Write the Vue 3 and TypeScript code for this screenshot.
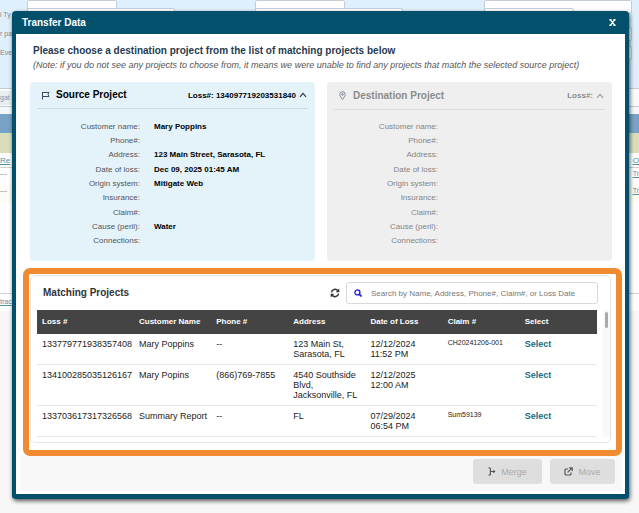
<script setup lang="ts">
import { ref, computed } from 'vue'

interface Detail { label: string; value: string }
interface Project {
  loss: string
  name: string
  phone: string
  address: string
  date: string
  time: string
  claim: string
}

const source: Detail[] = [
  { label: 'Customer name:', value: 'Mary Poppins' },
  { label: 'Phone#:', value: '' },
  { label: 'Address:', value: '123 Main Street, Sarasota, FL' },
  { label: 'Date of loss:', value: 'Dec 09, 2025 01:45 AM' },
  { label: 'Origin system:', value: 'Mitigate Web' },
  { label: 'Insurance:', value: '' },
  { label: 'Claim#:', value: '' },
  { label: 'Cause (peril):', value: 'Water' },
  { label: 'Connections:', value: '' },
]

const projects: Project[] = [
  { loss: '133779771938357408', name: 'Mary Poppins', phone: '--', address: '123 Main St, Sarasota, FL', date: '12/12/2024', time: '11:52 PM', claim: 'CH20241206-001' },
  { loss: '134100285035126167', name: 'Mary Popins', phone: '(866)769-7855', address: '4540 Southside Blvd, Jacksonville, FL', date: '12/12/2025', time: '12:00 AM', claim: '' },
  { loss: '133703617317326568', name: 'Summary Report', phone: '--', address: 'FL', date: '07/29/2024', time: '06:54 PM', claim: 'Sum59139' },
]

const columns = ['Loss #', 'Customer Name', 'Phone #', 'Address', 'Date of Loss', 'Claim #', 'Select']
const query = ref('')
const visible = computed(() => {
  const q = query.value.trim().toLowerCase()
  return q ? projects.filter((p) => Object.values(p).join(' ').toLowerCase().includes(q)) : projects
})
</script>

<template>
  <div class="screen">
    <div class="backdrop" aria-hidden="true">
      <div class="filters">
        <div class="frow first"><span></span><i class="box short"></i><i class="box short"></i><i class="box long"></i></div>
        <div class="frow"><span>l Ty</span><i class="box long"></i><i class="box long"></i><i class="box short"></i></div>
        <div class="frow"><span>r pa</span><i class="box wide"></i></div>
        <div class="frow"><span>Eve</span><i class="box wide"></i></div>
      </div>
      <div class="tools"><span>gat</span></div>
      <div class="band blue"></div>
      <div class="band khaki"></div>
      <div class="brow strong"><u>Re</u><u>O</u></div>
      <div class="brow"><span>---</span><u>Tr</u></div>
      <div class="brow tint"><span>---</span><u>Tr</u></div>
      <div class="blank"></div>
      <div class="brow tail"><u>trac</u></div>
    </div>

    <div class="overlay">
      <section class="modal" role="dialog" aria-labelledby="dialog-title">
        <header class="bar">
          <h1 id="dialog-title">Transfer Data</h1>
          <button class="close" type="button" aria-label="Close">
            <svg viewBox="0 0 7 7" width="7" height="7"><path d="M1.2 .6 5.8 6.4M5.8 .6 1.2 6.4M.4 .8H2.6M4.4 .8H6.6M.4 6.2H2.6M4.4 6.2H6.6" stroke="#fff" stroke-width="1.5" /></svg>
          </button>
        </header>

        <div class="content">
          <div class="intro">
            <h2>Please choose a destination project from the list of matching projects below</h2>
            <p>(Note: if you do not see any projects to choose from, it means we were unable to find any projects that match the selected source project)</p>
          </div>

          <div class="panels">
            <article class="panel source">
              <div class="panel-head">
                <svg class="lead" viewBox="0 0 9 9" width="9" height="9" fill="none" stroke="#3c4c60"><path d="M1.5 1V8.5M1.5 1.5H8L7 3.5 8 5.5H1.5" /></svg>
                <h3>Source Project</h3>
                <span class="loss">Loss#: 134097719203531840</span>
                <svg viewBox="0 0 8 6" width="8" height="6" fill="none" stroke="#333"><path d="M1 4.8 4 1.4 7 4.8" stroke-width="1.1" /></svg>
              </div>
              <dl>
                <template v-for="d in source" :key="d.label"><dt>{{ d.label }}</dt><dd>{{ d.value }}</dd></template>
              </dl>
            </article>
            <article class="panel dest">
              <div class="panel-head">
                <svg class="lead" viewBox="0 0 9 9" width="9" height="9" fill="none" stroke="#7b8797"><path d="M4.5 8.4C3 6.4 1.8 5 1.8 3.5a2.7 2.7 0 0 1 5.4 0C7.2 5 6 6.4 4.5 8.4Z" /><circle cx="4.5" cy="3.5" r=".8" /></svg>
                <h3>Destination Project</h3>
                <span class="loss">Loss#:</span>
                <svg viewBox="0 0 8 6" width="8" height="6" fill="none" stroke="#999"><path d="M1 4.8 4 1.4 7 4.8" stroke-width="1.1" /></svg>
              </div>
              <dl>
                <template v-for="d in source" :key="d.label"><dt>{{ d.label }}</dt><dd></dd></template>
              </dl>
            </article>
          </div>

          <div class="highlight">
            <div class="card">
              <div class="card-head">
                <h3>Matching Projects</h3>
                <button class="refresh" type="button" aria-label="Refresh">
                  <svg viewBox="0 0 10 10" width="10" height="10" fill="none" stroke="#333" stroke-width="1.5"><path d="M1.4 4.3A3.7 3.7 0 0 1 7.9 2.7M8.6 5.7A3.7 3.7 0 0 1 2.1 7.3" /><path d="M9.3 .6V4.2H5.7ZM.7 9.4V5.8H4.3Z" fill="#333" stroke="none" /></svg>
                </button>
                <label class="search">
                  <svg viewBox="0 0 8 8" width="8" height="8" fill="none" stroke="#2222d8"><circle cx="3.4" cy="3.4" r="2.5" stroke-width="1.4" /><path d="M5.2 5.2 7.5 7.5" stroke-width="1.7" /></svg>
                  <input v-model="query" type="text" aria-label="Search projects" placeholder="Search by Name, Address, Phone#, Claim#, or Loss Date" />
                </label>
              </div>
              <div class="list">
                <table>
                  <thead><tr><th v-for="c in columns" :key="c" scope="col">{{ c }}</th></tr></thead>
                  <tbody>
                    <tr v-for="p in visible" :key="p.loss">
                      <td>{{ p.loss }}</td>
                      <td>{{ p.name }}</td>
                      <td>{{ p.phone }}</td>
                      <td>{{ p.address }}</td>
                      <td>{{ p.date }}<br />{{ p.time }}</td>
                      <td class="claim">{{ p.claim }}</td>
                      <td><a href="#">Select</a></td>
                    </tr>
                  </tbody>
                </table>
                <div class="track"><div class="thumb"></div></div>
              </div>
            </div>
          </div>

          <footer>
            <button class="action" type="button" disabled>
              <svg viewBox="0 0 8 9" width="8" height="9" fill="none" stroke="#555" stroke-width="1.2"><path d="M.6.9H1.4Q2.4.9 2.4 2V7Q2.4 8.1 1.4 8.1H.6M2.4 4.5H7" /><path d="M5.2 2.8 7.6 4.5 5.2 6.2Z" fill="#555" stroke="none" /></svg>
              Merge
            </button>
            <button class="action move" type="button" disabled>
              <svg viewBox="0 0 9 9" width="9" height="9" fill="none" stroke="#555" stroke-width="1.2"><path d="M4 2H1.9Q1 2 1 2.9V7.1Q1 8 1.9 8H6.1Q7 8 7 7.1V5.5M3.6 5.4 7.6 1.4M5.2 .9H8.2V3.9" /></svg>
              Move
            </button>
          </footer>
        </div>
      </section>
    </div>
  </div>
</template>

<style>
body { background: #f7f7f7; }
</style>

<style scoped>
* { box-sizing: border-box; }
h1, h2, h3, p, dl, dd { margin: 0; }
button { font: inherit; border: 0; padding: 0; background: none; }
svg { display: block; flex: none; }
.screen { position: relative; min-height: 100vh; overflow: hidden; font-family: "Liberation Sans", Arial, sans-serif; font-size: 8px; }

.backdrop { font-size: 7px; color: #7f8790; line-height: 10px; }
.filters { height: 88px; overflow: hidden; background: #e0effc; }
.frow { display: grid; grid-template-columns: 27px 228px 229px 1fr; height: 19px; align-items: center; }
.frow span { white-space: nowrap; }
.frow.first { height: 5px; align-items: end; }
.box { height: 14px; background: #fff; border: 1px solid #c5ced6; border-radius: 2px; }
.box.short { width: 90px; }
.box.long { width: 148px; }
.box.wide { grid-column: 2 / 5; margin-right: 7px; }
.tools { display: flex; align-items: center; height: 19px; background: #f8fafb; border: solid #c3ccd3; border-width: 1px 0; color: #6a9ab8; }
.tools span { padding: 2px 2px 2px 0; background: #e8edf1; }
.band { height: 20px; }
.band.blue { height: 26px; border-top: 7px solid #f4f8fb; background: #78a3c6; }
.band.khaki { background: #d8deba; }
.brow { display: flex; justify-content: space-between; height: 17px; padding-top: 1px; background: #fff; color: #7a7a7a; white-space: nowrap; }
.brow u { color: #4b94a8; }
.brow.strong { height: 15px; padding-top: 3px; font-size: 8px; border-bottom: 1px solid #d0d0d0; }
.brow.tint { background: #fdfdf5; }
.blank { height: 92px; background: #fff; border-bottom: 1px solid #d0d0d0; }
.brow.tail { padding-top: 3px; }

.overlay { position: absolute; inset: 0; padding: 11px 10px 14px 12px; }
.modal { background: #fff; border: solid #03506d; border-width: 0 4px 5px; border-radius: 4px; box-shadow: 1px 2px 4px rgba(0, 0, 0, 0.65); overflow: hidden; }
.bar { display: flex; align-items: center; justify-content: space-between; height: 23px; padding: 0 8px 0 6px; background: #03506d; color: #fff; }
.bar h1 { font-size: 10px; line-height: 14px; }
.close { padding: 1px; }
.intro { padding: 10px 17px 0; }
.intro h2 { font-size: 10px; line-height: 14px; color: #263b50; }
.intro p { font-size: 9px; line-height: 14px; font-style: italic; color: #555; white-space: nowrap; }

.panels { display: grid; grid-template-columns: 1fr 1fr; gap: 12px; padding: 10px 13px 0 14px; }
.panel { padding: 0 7px 13px; border-radius: 4px; }
.source { background: #e4f2fa; }
.dest { background: #efefef; color: #8b8b8b; }
.panel-head { display: flex; align-items: center; height: 27px; padding: 0 1px 0 4px; border-bottom: 1px solid #ccdbe3; }
.dest .panel-head { height: 28px; border-color: #dcdcdc; }
.panel-head h3 { margin-left: 6px; font-size: 10px; line-height: 14px; }
.loss { margin: 0 3px 0 auto; font-weight: bold; }
dl { display: grid; grid-template-columns: 103px 1fr; column-gap: 14px; grid-auto-rows: 1fr; min-height: 129px; margin-top: 10px; align-items: center; }
.dest dl { margin-top: 9px; grid-template-columns: 104px 1fr; }
dt { text-align: right; color: #555; }
dd { font-weight: bold; color: #000; }
.dest dt { color: #858585; }

.highlight { margin: 7px 3px 0 7px; padding: 1px 5px 7px 1px; border: 6px solid #f08b32; border-radius: 7px; }
.card { border: 1px solid #e6e6e6; border-radius: 5px; padding-bottom: 5px; }
.card-head { display: flex; align-items: center; padding: 6px 12px 6px 12px; height: 34px; }
.card-head h3 { font-size: 10px; line-height: 14px; color: #333; }
.refresh { margin: 0 6px 0 auto; }
.search { display: flex; align-items: center; gap: 9px; width: 252px; height: 22px; padding: 0 7px; border: 1px solid #d8d8d8; border-radius: 3px; }
.search input { flex: 1; min-width: 0; padding: 0; border: 0; outline: 0; background: none; font: inherit; color: #333; }
.search input::placeholder { color: #777; }
.list { display: grid; grid-template-columns: 1fr 7px; column-gap: 6px; padding-left: 6px; }
table { width: 100%; table-layout: fixed; border-collapse: collapse; font-size: 9px; line-height: 10px; color: #222; }
th { height: 24px; padding: 0 5px; background: #444; color: #fff; font-size: 8px; text-align: left; }
th:first-child { width: 97px; }
td { padding: 5px; vertical-align: top; border-bottom: 1px solid #e8e8e8; white-space: nowrap; }
td:nth-child(4) { white-space: normal; }
td.claim { font-size: 7px; line-height: 8px; }
td a { color: #176b84; font-weight: bold; text-decoration: none; }
.track { padding: 2px; background: #f8f8f8; }
.thumb { height: 16px; border-radius: 2px; background: #aaa; }

footer { display: flex; justify-content: flex-end; gap: 8px; margin: 0 3px 3px 4px; padding: 3px 7px 7px; background: #f8f8f8; }
.action { display: flex; align-items: center; justify-content: center; gap: 5px; width: 69px; height: 25px; border-radius: 3px; background: #dedede; color: #aaa; font-size: 9px; }
.move { width: 65px; }
</style>
